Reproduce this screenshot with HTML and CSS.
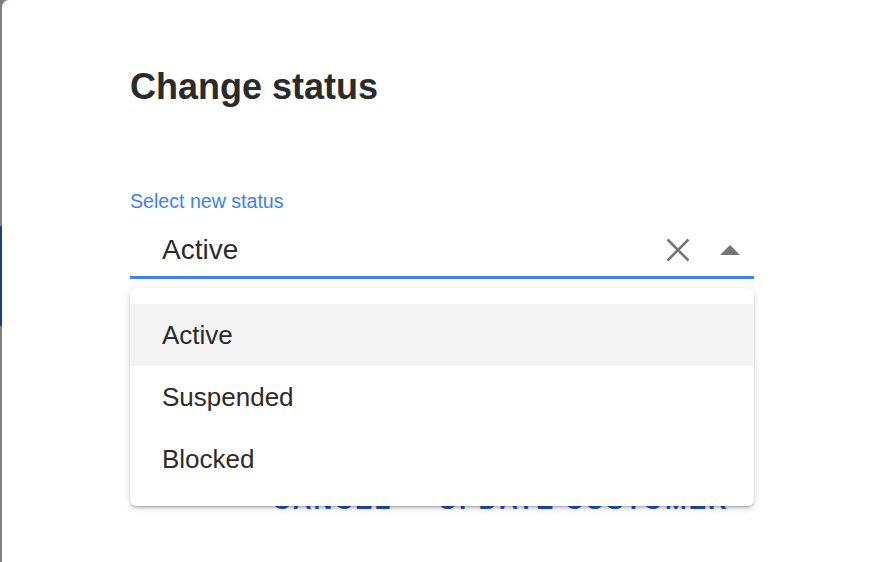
FILE: index.html
```html
<!DOCTYPE html>
<html lang="en">
<head>
<meta charset="utf-8">
<title>Change status</title>
<link rel="stylesheet" href="styles.css">
</head>
<body>
  <div class="backdrop-edge"><div class="edge-blue"></div></div>
  <div class="dialog">
    <h1 class="title">Change status</h1>
    <div class="field">
      <div class="label">Select new status</div>
      <div class="input-row">
        <span class="value">Active</span>
        <span class="clear">
          <svg width="24" height="24" viewBox="0 0 24 24"><path d="M1.5 1.5 L22.5 22.5 M22.5 1.5 L1.5 22.5" stroke="#757575" stroke-width="2.6" fill="none"/></svg>
        </span>
        <span class="caret">
          <svg width="20" height="10" viewBox="0 0 20 10"><polygon points="0,10 10,0 20,10" fill="#757575"/></svg>
        </span>
      </div>
      <ul class="menu">
        <li class="item selected">Active</li>
        <li class="item">Suspended</li>
        <li class="item">Blocked</li>
      </ul>
    </div>
    <div class="actions">
      <span class="btn">Cancel</span>
      <span class="btn">Update customer</span>
    </div>
  </div>
</body>
</html>
```
FILE: styles.css
```css
html, body {
  margin: 0;
  padding: 0;
  height: 100%;
}
body {
  display: flex;
  background: #808080;
  font-family: "Liberation Sans", Arial, sans-serif;
  color: #2b2b2b;
  overflow: hidden;
}
.backdrop-edge {
  width: 2px;
  flex: none;
}
.edge-blue {
  margin-top: 226px;
  height: 100px;
  background: #1f3e7c;
}
.dialog {
  flex: 1;
  box-sizing: border-box;
  height: 100%;
  overflow: hidden;
  background: #ffffff;
  border-top-left-radius: 7px;
  padding: 65px 0 0 128px;
}
.title {
  margin: 0;
  font-size: 36px;
  line-height: 43px;
  font-weight: bold;
  color: #2b2b2b;
}
.field {
  position: relative;
  width: 624px;
  margin-top: 82px;
}
.label {
  font-size: 19.6px;
  line-height: 23px;
  color: #3b82f6;
}
.input-row {
  display: flex;
  align-items: center;
  height: 32px;
  padding: 21px 0 10px 32px;
  border-bottom: 3px solid #3b82f6;
}
.value {
  flex: 1;
  font-size: 28px;
  line-height: 32px;
  color: #2b2b2b;
}
.clear {
  display: flex;
  margin-right: 30px;
}
.clear svg {
  width: 24px;
  height: 24px;
}
.caret {
  display: flex;
  margin-right: 14px;
}
.menu {
  position: absolute;
  left: 0;
  top: 98px;
  width: 624px;
  margin: 0;
  padding: 16px 0;
  list-style: none;
  background: #ffffff;
  border-radius: 6px;
  box-shadow: 0 2px 3px -1px rgba(0,0,0,0.3), 0 3px 6px rgba(0,0,0,0.1), 0 0 10px rgba(0,0,0,0.06);
  z-index: 2;
}
.item {
  height: 62px;
  display: flex;
  align-items: center;
  padding-left: 32px;
  font-size: 26px;
  color: #2b2b2b;
}
.item.selected {
  background: #f4f4f4;
}
.actions {
  display: flex;
  gap: 46px;
  margin-top: 206px;
  padding-left: 142px;
}
.btn {
  font-size: 26px;
  line-height: 30px;
  font-weight: bold;
  letter-spacing: 2px;
  text-transform: uppercase;
  color: #2156c2;
}
```
